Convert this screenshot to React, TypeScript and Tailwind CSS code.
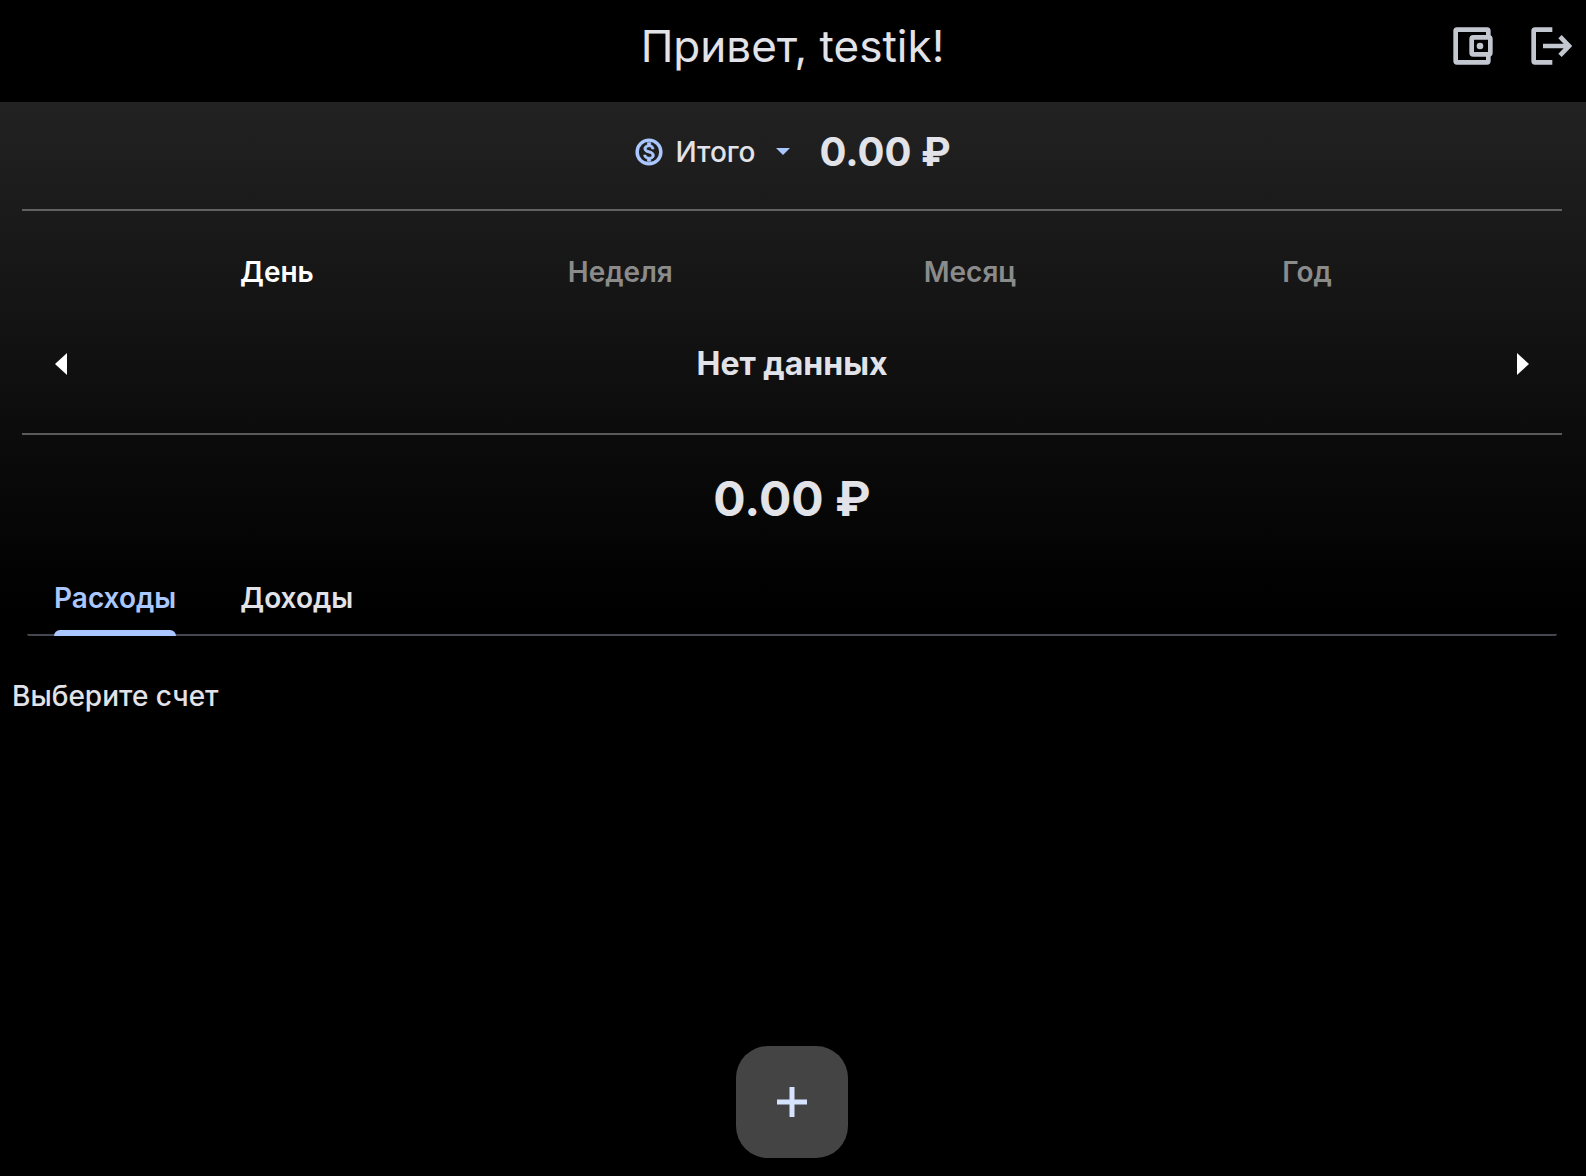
import { useState } from "react";

const periods = ["День", "Неделя", "Месяц", "Год"];
const kinds = ["Расходы", "Доходы"];

function WalletIcon() {
  return (
    <svg className="h-[38px] w-10" viewBox="0 0 120 114" fill="none" stroke="#c3c7cf" strokeWidth="14" aria-hidden="true">
      <path d="M106 29V12q0-4-4-4H12q-4 0-4 4v90q0 4 4 4h90q4 0 4-4V85" />
      <rect x="56" y="31" width="56" height="51" rx="5" />
      <circle cx="81" cy="57" r="10" fill="#c3c7cf" stroke="none" />
    </svg>
  );
}

function LogoutIcon() {
  return (
    <svg className="h-[38px] w-[42px]" viewBox="0 0 126 114" fill="none" stroke="#c3c7cf" strokeWidth="14" aria-hidden="true">
      <path d="M64 8H12q-4 0-4 4v90q0 4 4 4h52" />
      <path d="M36 57h74M87 29l27 28-27 28" />
    </svg>
  );
}

function CoinIcon() {
  return (
    <svg className="size-8" viewBox="0 0 24 24" fill="#aac7ff" stroke="#aac7ff" aria-hidden="true">
      <circle cx="12" cy="12" r="8.9" fill="none" strokeWidth="2.6" />
      <path
        strokeWidth="0.6"
        d="M12.31 11.14c-1.77-.45-2.34-.94-2.34-1.67 0-.84.79-1.43 2.1-1.43 1.38 0 1.9.66 1.94 1.64h1.71c-.05-1.34-.87-2.57-2.49-2.97V5H10.9v1.69c-1.51.32-2.72 1.3-2.72 2.81 0 1.79 1.49 2.69 3.66 3.21 1.95.46 2.34 1.15 2.34 1.87 0 .53-.39 1.39-2.1 1.39-1.6 0-2.23-.72-2.32-1.64H8.04c.1 1.7 1.36 2.66 2.86 2.97V19h2.34v-1.67c1.52-.29 2.72-1.16 2.73-2.77-.01-2.2-1.9-2.96-3.66-3.42z"
      />
    </svg>
  );
}

export default function App() {
  const [period, setPeriod] = useState("День");
  const [kind, setKind] = useState("Расходы");

  return (
    <div className="flex min-h-screen flex-col bg-black font-['Inter',sans-serif] text-[28px] leading-10 text-[#e2e2e9]">
      <header className="grid grid-cols-[1fr_auto_1fr] items-center pt-[18px] pr-[13px] pb-7 pl-3">
        <h1 className="col-start-2 text-[44px] leading-[56px]">Привет, testik!</h1>
        <div className="flex items-center justify-end gap-[38px]">
          <button type="button" aria-label="Счета">
            <WalletIcon />
          </button>
          <button type="button" aria-label="Выйти">
            <LogoutIcon />
          </button>
        </div>
      </header>

      <main className="flex flex-1 flex-col">
        <div className="bg-linear-to-b/srgb from-[#222222] to-black to-95% pr-[2px]">
          <section className="mx-[22px] flex h-[109px] items-center justify-center border-b-2 border-[#616161] pb-2">
            <button type="button" className="flex items-center font-medium">
              <CoinIcon />
              <span className="ml-[10px]">Итого</span>
              <svg className="mr-[30px] ml-5 h-[7px] w-[14px]" viewBox="0 0 14 7" aria-hidden="true">
                <path d="M0 0h14L7 7z" fill="#aac7ff" />
              </svg>
            </button>
            <strong className="text-[40px] leading-[48px] font-bold">0.00 ₽</strong>
          </section>

          <div className="flex justify-evenly px-[10px] pt-[41px]">
            {periods.map((name) => (
              <button
                key={name}
                type="button"
                aria-pressed={period === name}
                onClick={() => setPeriod(name)}
                className={`min-w-32 px-6 font-semibold ${period === name ? "text-white" : "text-[#8b8b8b]"}`}
              >
                {name}
              </button>
            ))}
          </div>

          <div className="mx-[22px] flex h-[143px] items-center justify-between border-b-2 border-[#5a5a5a] px-[33px] pt-[2px]">
            <button type="button" aria-label="Назад">
              <svg className="h-[22px] w-3" viewBox="0 0 12 22" aria-hidden="true">
                <path d="M12 0v22L0 11z" fill="#fff" />
              </svg>
            </button>
            <h2 className="text-[32px] leading-10 font-bold">Нет данных</h2>
            <button type="button" aria-label="Вперёд">
              <svg className="h-[22px] w-3" viewBox="0 0 12 22" aria-hidden="true">
                <path d="M0 0v22l12-11z" fill="#fff" />
              </svg>
            </button>
          </div>

          <p className="pt-9 text-center text-[48px] leading-[56px] font-bold">0.00 ₽</p>

          <div className="mx-[27px] mt-[38px] flex h-[71px] gap-16 rounded-b-[2px] border-b-2 border-[#44474e] px-[27px]">
            {kinds.map((name) => (
              <button
                key={name}
                type="button"
                aria-pressed={kind === name}
                onClick={() => setKind(name)}
                className={`-mb-[2px] flex flex-col justify-between pt-[13px] font-semibold ${kind === name ? "text-[#aac7ff]" : ""}`}
              >
                {name}
                {kind === name && <span className="h-[6px] w-full rounded-t-md bg-[#aac7ff]" />}
              </button>
            ))}
          </div>
        </div>

        <p className="px-3 pt-10 font-medium">Выберите счет</p>
      </main>

      <footer className="flex justify-center pr-[2px] pb-[18px]">
        <button
          type="button"
          aria-label="Добавить"
          className="flex size-28 items-center justify-center rounded-[32px] bg-[#444444]"
        >
          <svg className="size-[30px]" viewBox="0 0 30 30" fill="none" stroke="#d6e3ff" strokeWidth="5" aria-hidden="true">
            <path d="M15 0v30M0 15h30" />
          </svg>
        </button>
      </footer>
    </div>
  );
}
